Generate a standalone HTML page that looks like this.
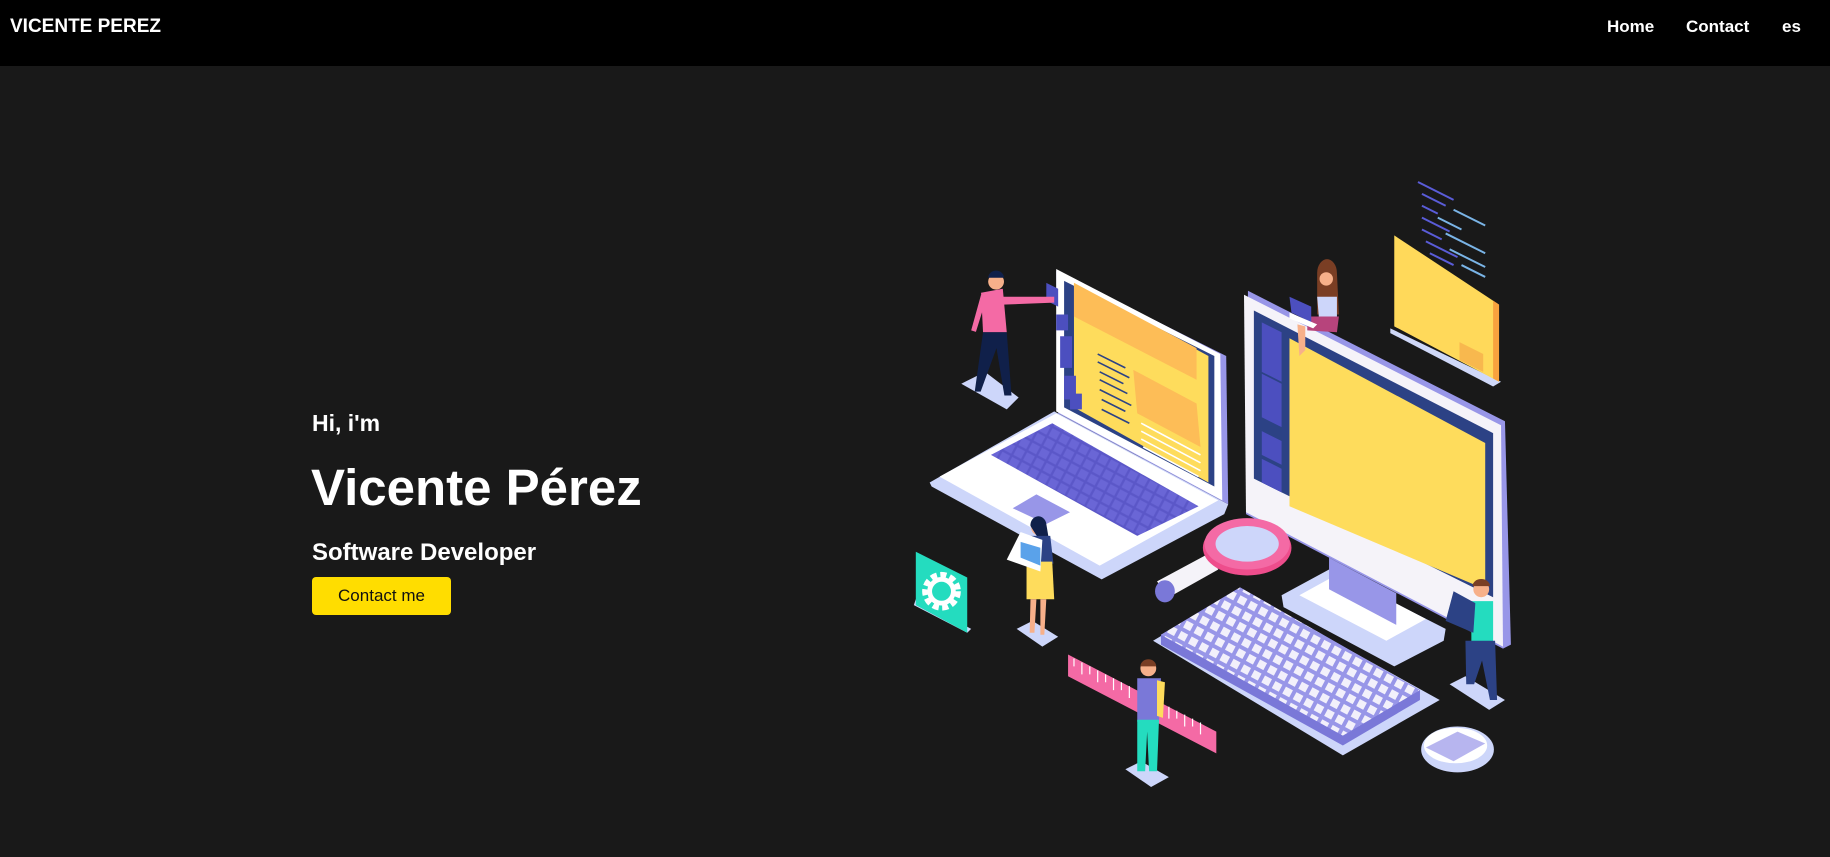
<!DOCTYPE html>
<html><head><meta charset="utf-8"><style>
*{margin:0;padding:0;box-sizing:border-box}
body{width:1830px;height:857px;background:#191919;font-family:"Liberation Sans",sans-serif;overflow:hidden;position:relative;color:#fff}
nav{position:absolute;left:0;top:0;width:1830px;height:66px;background:#000}
.logo{position:absolute;left:10px;top:16px;font-size:19px;font-weight:bold}
.nl{position:absolute;top:17px;font-size:17px;font-weight:bold}
.hi{position:absolute;left:312px;top:410px;font-size:23px;font-weight:bold}
.name{position:absolute;left:311px;top:458px;font-size:51px;font-weight:bold}
.sd{position:absolute;left:312px;top:539px;font-size:24px;font-weight:bold}
.btn{position:absolute;left:312px;top:577px;width:139px;height:38px;background:#ffdd00;border-radius:4px;color:#111;font-size:17px;text-align:center;line-height:38px}
svg{position:absolute;left:900px;top:170px}
</style></head><body>
<nav><div class="logo">VICENTE PEREZ</div>
<div class="nl" style="left:1607px">Home</div>
<div class="nl" style="left:1686px">Contact</div>
<div class="nl" style="left:1782px">es</div></nav>
<div class="hi">Hi, i'm</div>
<div class="name">Vicente Pérez</div>
<div class="sd">Software Developer</div>
<div class="btn">Contact me</div>
<svg width="620" height="650" viewBox="0 0 1568 1643">
<defs>
<pattern id="k" width="30" height="30" patternUnits="userSpaceOnUse" patternTransform="rotate(28)"><rect width="30" height="30" fill="#9896e8"/><rect x="5" y="5" width="20" height="20" fill="#f2f0fb"/></pattern>
<pattern id="k2" width="28" height="28" patternUnits="userSpaceOnUse" patternTransform="rotate(28)"><rect width="28" height="28" fill="#5b57c8"/><rect x="3" y="3" width="22" height="22" fill="#6a66d6"/></pattern>
</defs>
<g stroke="#5a5cd8" stroke-width="5">
<path d="M1310 30l90 45M1320 60l60 30M1320 90l40 20M1320 120l70 35M1320 150l50 25M1330 180l80 40M1340 210l60 30"/></g>
<g stroke="#7ab4e6" stroke-width="5"><path d="M1360 120l60 30M1400 100l80 40M1380 160l100 50M1390 200l90 45M1420 240l60 30M1350 250l90 45"/></g>
<path d="M1240 400l280 135-20 12-260-135z" fill="#cfd8f8"/>
<path d="M1250 165l265 175v195L1250 395z" fill="#ffd95a"/>
<path d="M1500 330l15 10v195l-15-8z" fill="#f8a23e"/>
<path d="M1415 435l60 30v45l-60-30z" fill="#f8b84e"/>
<path d="M75 790L390 610l440 235-10 25-310 165L80 800z" fill="#cdd6fa"/>
<path d="M100 775L395 615l410 220-300 165z" fill="#fff"/>
<path d="M230 720l155-80 370 210-155 75z" fill="url(#k2)"/>
<path d="M285 855l60-35 85 45-60 30z" fill="#9896e8"/>
<path d="M395 255l430 215 5 375-430-230z" fill="#9896e8"/>
<path d="M395 250l415 215 5 370-420-225z" fill="#fff"/>
<path d="M415 280l380 190v330L415 600z" fill="#2c4285"/>
<path d="M440 285l340 185v320L440 600z" fill="#fedc5c"/>
<path d="M440 285l310 165v80L440 370z" fill="#fdbd57"/>
<path d="M590 505l160 85 10 110-160-85z" fill="#fdbd57"/>
<path d="M395 365h30v40h-30zM405 420h30v80h-30zM415 520h30v60h-30zM430 565h30v40h-30z" fill="#4c4fbf"/>
<path d="M370 285l30 15v45l-30-15z" fill="#4c4fbf"/>
<g stroke="#2c4285" stroke-width="4"><path d="M500 465l70 35M500 485l80 40M505 510l60 30M505 530l70 35M505 555l80 40M510 580l60 30M510 605l70 35"/></g>
<g stroke="#fff" stroke-width="4"><path d="M610 640l150 80M610 660l150 80M610 680l150 80M615 700l140 75"/></g>
<path d="M965 1075l120-65 295 150-5 30-125 65-280-150z" fill="#cdd6fa"/>
<path d="M1010 1075l100-55 220 115-100 55z" fill="#fff"/>
<path d="M1085 980l170 90v80l-170-90z" fill="#9896e8"/>
<path d="M880 305l650 330 15 565-20 10-650-340z" fill="#9896e8"/>
<path d="M870 315l650 330 5 560-650-340z" fill="#f5f3f9"/>
<path d="M895 355l605 310v415L895 780z" fill="#2c4285"/>
<path d="M985 425l495 265v370L985 850z" fill="#fedc5c"/>
<path d="M915 385l50 25v80l-50-25zM915 450l50 25v60l-50-25zM915 515l50 25v110l-50-25zM915 660l50 25v60l-50-25zM915 730l50 25v60l-50-25z" fill="#4c4fbf"/>
<path d="M650 1040l130-70 25 40-125 70z" fill="#f5f3f9"/>
<ellipse cx="670" cy="1065" rx="25" ry="28" fill="#7a78d8"/>
<ellipse cx="878" cy="955" rx="112" ry="70" fill="#ee4d8c"/>
<ellipse cx="878" cy="945" rx="108" ry="65" fill="#f46aa5"/>
<ellipse cx="878" cy="945" rx="80" ry="45" fill="#cdd6fa"/>
<path d="M640 1190l220-130 505 280-245 140z" fill="#cdd6fa"/>
<path d="M660 1175l200-120 455 260v25l-195 115-460-255z" fill="#7a78d8"/>
<path d="M660 1175l200-120 455 260-195 115z" fill="url(#k)"/>
<ellipse cx="1410" cy="1465" rx="92" ry="58" fill="#cdd6fa"/>
<ellipse cx="1405" cy="1455" rx="80" ry="45" fill="#fff"/>
<path d="M1330 1460l80-40 70 30-80 45z" fill="#9896e8" opacity=".7"/>
<path d="M35 1100l135 70 10-10-140-75z" fill="#cdd6fa"/>
<path d="M40 965l130 65v140l-130-70z" fill="#24dcbf"/>
<circle cx="105" cy="1065" r="38" fill="none" stroke="#fff" stroke-width="22" stroke-dasharray="14 8"/>
<circle cx="105" cy="1065" r="30" fill="none" stroke="#fff" stroke-width="12"/>
<path d="M425 1225l375 195v55l-375-195z" fill="#f46aa5"/>
<g stroke="#fff" stroke-width="3"><path d="M440 1235v20M460 1245v30M480 1255v20M500 1265v30M520 1275v20M540 1285v30M560 1295v20M580 1305v30M680 1357v30M700 1367v20M720 1377v30M740 1387v20M760 1397v30"/></g>
<path d="M155 540l60-30 85 65-30 30z" fill="#cdd6fa"/>
<path d="M295 1160l40-20 65 40-40 25z" fill="#cdd6fa"/>
<path d="M570 1515l40-20 70 40-45 25z" fill="#cdd6fa"/>
<path d="M1390 1300l40-20 100 60-40 25z" fill="#cdd6fa"/>
<circle cx="243" cy="282" r="20" fill="#f7b08a"/><path d="M223 272a20 18 0 0140 0z" fill="#10204a"/>
<path d="M205 310l55-10 10 110h-60z" fill="#f46aa5"/><path d="M260 320l130 0v15l-130 5z" fill="#f46aa5"/>
<path d="M210 410h60l12 160h-18l-20-120-40 110h-15z" fill="#10204a"/>
<path d="M205 315l-25 90 12 4 25-80z" fill="#f46aa5"/>
<circle cx="350" cy="905" r="18" fill="#f7b08a"/><path d="M330 900a20 22 0 0140-5l10 60-15 0z" fill="#10204a"/>
<path d="M330 925h50l8 70h-60z" fill="#2c4285"/><path d="M320 990h65l5 95h-70z" fill="#fedc5c"/>
<path d="M330 1085h15l-5 85h-12zM355 1085h15l-5 90h-10z" fill="#f7b08a"/>
<path d="M270 985l85 30 5-80-55-20z" fill="#fff"/><path d="M305 940l50 15v45l-50-20z" fill="#5aa2ea"/>
<circle cx="628" cy="1260" r="20" fill="#f7b08a"/><path d="M608 1255a20 18 0 0140 0z" fill="#7a3e24"/>
<path d="M600 1285h60l-5 110h-55z" fill="#7a78d8"/><path d="M650 1290l20 5-5 90-15-5z" fill="#fedc5c"/>
<path d="M600 1390h55l-5 130h-20l-5-100-5 100h-20z" fill="#24dcbf"/>
<path d="M1055 260a25 35 0 0150 0l5 105h-55z" fill="#7a3e24"/>
<circle cx="1078" cy="275" r="17" fill="#f7b08a"/>
<path d="M1055 320h50v60h-45z" fill="#cdd6fa"/><path d="M1030 370h80l-5 40-75-5z" fill="#b7447c"/>
<path d="M1005 390l20 5v60l-15 15z" fill="#f7b08a"/>
<path d="M985 320l55 25v40l-50-25z" fill="#4c4fbf"/><path d="M985 360l70 30-10 10-60-25z" fill="#fff"/>
<circle cx="1470" cy="1060" r="20" fill="#f7b08a"/><path d="M1448 1052a22 18 0 0144 0z" fill="#7a3e24"/>
<path d="M1445 1090h55v110h-55z" fill="#24dcbf"/>
<path d="M1430 1190h75l5 150h-18l-20-100-20 60h-20z" fill="#2c4285"/>
<path d="M1380 1140l70 30 5-75-55-30z" fill="#2c4285"/>
</svg>
</body></html>
